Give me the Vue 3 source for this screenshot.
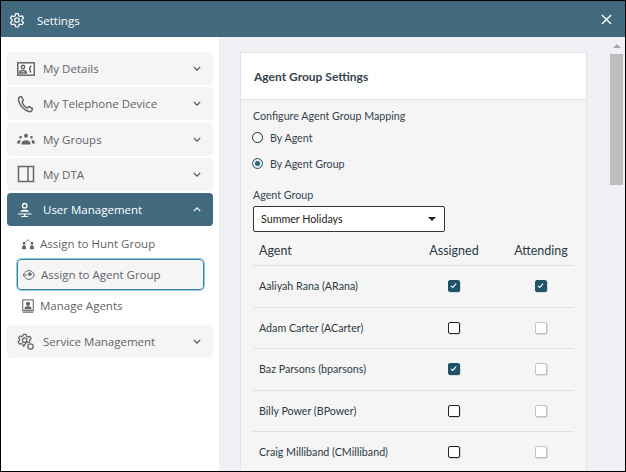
<template>
  <div class="window">
    <header class="title-bar">
      <div class="title">
        <svg class="title-icon" viewBox="0 0 24 24" fill="none" stroke="#fff" stroke-width="1.8" stroke-linejoin="round">
          <path d="M10 2.5h4l.6 3 2.3 1.3 2.9-1 2 3.4-2.3 2v2.6l2.3 2-2 3.4-2.9-1-2.3 1.3-.6 3h-4l-.6-3-2.3-1.3-2.9 1-2-3.4 2.3-2v-2.6l-2.3-2 2-3.4 2.9 1 2.3-1.3z" />
          <circle cx="12" cy="12" r="3.4" />
        </svg>
        <span>Settings</span>
      </div>
      <svg class="close" viewBox="0 0 12 12" stroke="#fff" stroke-width="1.5">
        <path d="M1 1l10 10M11 1L1 11" />
      </svg>
    </header>

    <div class="body">
      <aside class="sidebar">
        <div class="nav-item">
          <svg class="nav-icon" viewBox="0 0 18 14" fill="none" stroke="#666" stroke-width="1.5">
            <rect x="0.8" y="0.8" width="16.4" height="12.4" fill="#fff" />
            <circle cx="6" cy="5" r="1.7" />
            <path d="M2.5 11c0-3.5 7-3.5 7 0zM14 3.5c-1.5 2-1.500 5 0 7" />
          </svg>
          <span class="nav-label">My Details</span>
          <svg class="chevron" viewBox="0 0 10 6"><path d="M1 1l4 4 4-4" /></svg>
        </div>
        <div class="nav-item">
          <svg class="nav-icon" viewBox="0 0 18 18" fill="none" stroke="#666" stroke-width="1.5" stroke-linejoin="round">
            <path d="M2 2.5l2.5-1 2 4-1.500 1.500c1 3 3 5 5.500 6l1.500-1.500 3.500 2-.8 2.300c-.3.7-1 1-2 .9C7 15.500 1.500 9.500 1.500 4c0-.7 0-1.200.5-1.500z" />
          </svg>
          <span class="nav-label">My Telephone Device</span>
          <svg class="chevron" viewBox="0 0 10 6"><path d="M1 1l4 4 4-4" /></svg>
        </div>
        <div class="nav-item">
          <svg class="nav-icon" viewBox="0 0 20 14" fill="#666">
            <circle cx="10" cy="3.5" r="2.2" />
            <circle cx="4" cy="5" r="1.4" />
            <circle cx="16" cy="5" r="1.4" />
            <path d="M5 12c0-5 10-5 10 0v1H5zM0 12c0-3 2-4 3.800-3.800C3.300 9.500 3.500 11 3.500 12zM20 12c0-3-2-4-3.800-3.800.5 1.300.3 2.800.3 3.800z" />
          </svg>
          <span class="nav-label">My Groups</span>
          <svg class="chevron" viewBox="0 0 10 6"><path d="M1 1l4 4 4-4" /></svg>
        </div>
        <div class="nav-item">
          <svg class="nav-icon" viewBox="0 0 18 18" fill="none" stroke="#666" stroke-width="1.5">
            <rect x="1.5" y="1.5" width="15" height="15" />
            <path d="M11 1.5v15" />
          </svg>
          <span class="nav-label">My DTA</span>
          <svg class="chevron" viewBox="0 0 10 6"><path d="M1 1l4 4 4-4" /></svg>
        </div>
        <div class="nav-item active">
          <svg class="nav-icon" viewBox="0 0 21 18" fill="#fff">
            <circle cx="9" cy="4" r="2.6" fill="none" stroke="#fff" stroke-width="1.5" />
            <path d="M4 11c0-3 10-3 10 0zM1 13h16v1.300H1zM8.300 13h1.400v3H8.300zM5 16h8v1.200H5z" />
          </svg>
          <span class="nav-label">User Management</span>
          <svg class="chevron" viewBox="0 0 10 6"><path d="M1 5l4-4 4 4" /></svg>
        </div>

        <div class="sub-list">
          <div class="sub-item">
            <svg class="sub-icon" viewBox="0 0 16 14" fill="#666">
              <path d="M1 13c0-3 1-5 2.5-5S6 10 6 13zM10 13c0-3 1-5 2.5-5s2.500 2 2.500 5z" />
              <circle cx="3.5" cy="6" r="1.5" />
              <circle cx="12.5" cy="6" r="1.5" />
              <path d="M5 5l3-3 2 2" fill="none" stroke="#666" stroke-width="1" />
            </svg>
            <span>Assign to Hunt Group</span>
          </div>
          <div class="sub-item selected">
            <svg class="sub-icon" viewBox="0 0 16 14" fill="none" stroke="#666" stroke-width="1.1">
              <path d="M1.5 7c1.500-3.500 4-5 6.500-5s5 1.500 6 5c-1 3.500-3.500 5-6 5S3 10.500 1.500 7z" />
              <circle cx="9" cy="6" r="1.5" fill="#666" />
              <path d="M1.5 7H6" />
            </svg>
            <span>Assign to Agent Group</span>
          </div>
          <div class="sub-item">
            <svg class="sub-icon" viewBox="0 0 14 16" fill="none" stroke="#666" stroke-width="1.2">
              <rect x="1" y="1" width="12" height="12" />
              <circle cx="7" cy="5.5" r="1.8" fill="#666" />
              <path d="M3.5 11c0-3 7-3 7 0zM1 15h12" fill="#666" />
            </svg>
            <span>Manage Agents</span>
          </div>
        </div>

        <div class="nav-item">
          <svg class="nav-icon" viewBox="0 0 20 20" fill="none" stroke="#666" stroke-width="1.4" stroke-linejoin="round">
            <path d="M7 1.5h3l.5 2 1.700 1 2-.7 1.500 2.500-1.500 1.500v1.900l-.6.6-3.100.2-2.400 3.300-.6 1-.5-.1-.5-2-1.700-1-2 .7-1.500-2.500 1.500-1.500v-2L1.700 5.800l1.500-2.500 2 .7 1.300-1z" />
            <circle cx="8.5" cy="8" r="2.5" />
            <circle cx="15" cy="15" r="3" />
          </svg>
          <span class="nav-label">Service Management</span>
          <svg class="chevron" viewBox="0 0 10 6"><path d="M1 1l4 4 4-4" /></svg>
        </div>
      </aside>

      <main class="content">
        <section class="card">
          <h2 class="card-title">Agent Group Settings</h2>
          <div class="card-body">
            <div class="field-label">Configure Agent Group Mapping</div>
            <label class="radio-row">
              <span class="radio"></span>
              <span>By Agent</span>
            </label>
            <label class="radio-row">
              <span class="radio on"></span>
              <span>By Agent Group</span>
            </label>
            <div class="field-label group-label">Agent Group</div>
            <div class="select">
              <span>Summer Holidays</span>
              <span class="caret"></span>
            </div>

            <div class="table">
              <div class="row head">
                <span class="name">Agent</span>
                <span class="col">Assigned</span>
                <span class="col">Attending</span>
              </div>
              <div v-for="agent in agents" :key="agent.name" class="row">
                <span class="name">{{ agent.name }}</span>
                <span class="col">
                  <span class="check" :class="{ on: agent.assigned }">
                    <svg v-if="agent.assigned" viewBox="0 0 12 12" fill="none" stroke="#fff" stroke-width="1.5"><path d="M2.5 6.5l2.500 2 4.500-5" /></svg>
                  </span>
                </span>
                <span class="col">
                  <span class="check" :class="{ on: agent.attending, off: !agent.attending }">
                    <svg v-if="agent.attending" viewBox="0 0 12 12" fill="none" stroke="#fff" stroke-width="1.5"><path d="M2.5 6.5l2.500 2 4.500-5" /></svg>
                  </span>
                </span>
              </div>
            </div>
          </div>
        </section>
        <div class="scrollbar">
          <span class="scroll-up"></span>
          <span class="scroll-thumb"></span>
        </div>
      </main>
    </div>
  </div>
</template>

<script setup>
const agents = [
  { name: 'Aaliyah Rana (ARana)', assigned: true, attending: true },
  { name: 'Adam Carter (ACarter)', assigned: false, attending: false },
  { name: 'Baz Parsons (bparsons)', assigned: true, attending: false },
  { name: 'Billy Power (BPower)', assigned: false, attending: false },
  { name: 'Craig Milliband (CMilliband)', assigned: false, attending: false }
]
</script>

<style scoped>
.window {
  width: 626px;
  height: 472px;
  box-sizing: border-box;
  border: 1px solid #000;
  display: flex;
  flex-direction: column;
  overflow: hidden;
  font-family: "Open Sans", sans-serif;
  background: #fff;
}

.title-bar {
  height: 36px;
  flex: none;
  background: #416a7e;
  color: #fff;
  display: flex;
  align-items: center;
  justify-content: space-between;
  padding: 0 13px 0 8px;
}

.title {
  display: flex;
  align-items: center;
  gap: 12px;
  font-size: 11.5px;
  padding-top: 2px;
}

.title-icon {
  width: 16px;
  height: 16px;
}

.close {
  width: 11px;
  height: 11px;
}

.body {
  flex: 1;
  display: flex;
  min-height: 0;
}

.sidebar {
  width: 218px;
  flex: none;
  box-sizing: border-box;
  padding: 15px 6px 0;
  display: flex;
  flex-direction: column;
  gap: 2.25px;
}

.nav-item {
  height: 33px;
  flex: none;
  border-radius: 4px;
  background: #f5f5f5;
  color: #5f6368;
  display: flex;
  align-items: center;
  font-size: 11.5px;
  padding: 0 12px 0 10px;
}

.nav-item.active {
  background: #416a7e;
  color: #fff;
  font-weight: 500;
}

.nav-icon {
  width: 18px;
  height: 18px;
  flex: none;
  margin-right: 8px;
}

.nav-label {
  flex: 1;
}

.chevron {
  width: 8px;
  height: 5px;
  fill: none;
  stroke: #4a4f55;
  stroke-width: 1.5;
}

.active .chevron {
  stroke: #fff;
}

.sub-list {
  display: flex;
  flex-direction: column;
  padding: 0 9px 1.5px 10px;
}

.sub-item {
  height: 31px;
  display: flex;
  align-items: center;
  gap: 5px;
  padding-left: 4px;
  font-size: 11.5px;
  color: #5f6368;
  box-sizing: border-box;
}

.sub-item.selected {
  background: #f5f5f5;
  border: 1px solid #3a7f9c;
  outline: 1.5px solid #8fd0e8;
  border-radius: 4px;
  padding-left: 4px;
}

.sub-icon {
  width: 14px;
  height: 14px;
  flex: none;
}

.content {
  flex: 1;
  background: #eef0f4;
  display: flex;
  padding: 15px 2px 0 21px;
  min-width: 0;
}

.card {
  width: 347px;
  flex: none;
  align-self: flex-start;
  box-sizing: border-box;
  border: 1px solid #e2e4e6;
  background: #f5f5f5;
}

.card-title {
  margin: 0;
  height: 46px;
  line-height: 47px;
  padding-left: 13px;
  background: #fff;
  border-bottom: 1px solid #e2e4e6;
  font-family: Lato, sans-serif;
  font-size: 12px;
  font-weight: 700;
  color: #36434d;
}

.card-body {
  padding: 8px 12px 0;
  font-family: Lato, sans-serif;
  font-size: 10.7px;
  color: #36434d;
}

.field-label {
  line-height: 16px;
}

.group-label {
  margin-top: 11px;
}

.radio-row {
  display: flex;
  align-items: center;
  gap: 7px;
  height: 26px;
  margin-left: -1px;
}

.radio {
  width: 9px;
  height: 9px;
  border: 1px solid #222;
  border-radius: 50%;
  background: #fff;
  position: relative;
}

.radio.on {
  border-color: #1f5468;
  background: #e2eaee;
}

.radio.on::after {
  content: "";
  position: absolute;
  inset: 2px;
  border-radius: 50%;
  background: #2f6478;
}

.select {
  margin-top: 3px;
  width: 192px;
  height: 26px;
  box-sizing: border-box;
  border: 1px solid #2b3a42;
  border-radius: 2px;
  background: #fff;
  display: flex;
  align-items: center;
  justify-content: space-between;
  padding: 0 8px 1px 7px;
  color: #222;
}

.caret {
  border-left: 4px solid transparent;
  border-right: 4px solid transparent;
  border-top: 4px solid #222;
}

.row {
  display: grid;
  grid-template-columns: 147px 66px 66px;
  column-gap: 21px;
  align-items: center;
  height: 41.5px;
  box-sizing: border-box;
  border-bottom: 1px solid #e0e0e0;
  color: #2c3a44;
}

.row.head {
  height: 34px;
  padding-top: 4px;
  font-size: 12.5px;
}

.name {
  padding-left: 6px;
  padding-bottom: 1px;
}

.col {
  display: flex;
  justify-content: center;
}

.check {
  width: 12px;
  height: 12px;
  box-sizing: border-box;
  border: 1.5px solid #222;
  border-radius: 2px;
  background: #fff;
  display: block;
  box-shadow: 0.5px 0.5px 0 #bbb;
}

.check.on {
  background: #1f5468;
  border-color: #1f5468;
}

.check.off {
  border-color: #c4c4c4;
}

.check svg {
  display: block;
  width: 9px;
  height: 9px;
}

.scrollbar {
  width: 13px;
  margin-left: auto;
  display: flex;
  flex-direction: column;
  align-items: center;
  margin-top: -15px;
}

.scroll-up {
  margin-top: 7px;
  border-left: 4px solid transparent;
  border-right: 4px solid transparent;
  border-bottom: 4px solid #a8a8a8;
}

.scroll-thumb {
  margin-top: 6px;
  width: 13px;
  height: 131px;
  background: #bdbdbd;
}
</style>
